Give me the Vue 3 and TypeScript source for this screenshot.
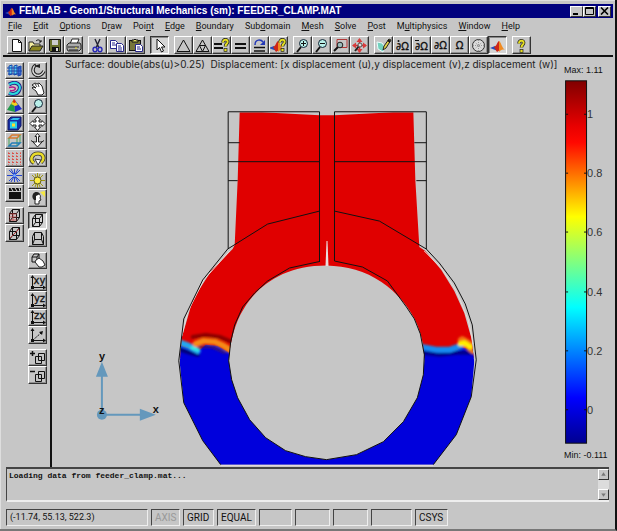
<script setup lang="ts">
interface Tool {
  id: string
  label: string
  pressed?: boolean
}
interface Menu {
  before: string
  key: string
  after: string
}

const menus: Menu[] = [
  { before: '', key: 'F', after: 'ile' },
  { before: '', key: 'E', after: 'dit' },
  { before: '', key: 'O', after: 'ptions' },
  { before: 'D', key: 'r', after: 'aw' },
  { before: 'Poi', key: 'n', after: 't' },
  { before: '', key: 'E', after: 'dge' },
  { before: '', key: 'B', after: 'oundary' },
  { before: 'Sub', key: 'd', after: 'omain' },
  { before: '', key: 'M', after: 'esh' },
  { before: '', key: 'S', after: 'olve' },
  { before: '', key: 'P', after: 'ost' },
  { before: 'M', key: 'u', after: 'ltiphysics' },
  { before: '', key: 'W', after: 'indow' },
  { before: '', key: 'H', after: 'elp' },
]

const t = (id: string, label: string, pressed = false): Tool => ({ id, label, pressed })

const toolbar: Tool[][] = [
  [t('new', 'New'), t('open', 'Open'), t('save', 'Save'), t('print', 'Print')],
  [t('cut', 'Cut'), t('copy', 'Copy'), t('paste', 'Paste')],
  [t('pointer', 'Select', true)],
  [
    t('mesh', 'Initialize mesh'),
    t('refine', 'Refine mesh'),
    t('solveParams', 'Solver parameters'),
    t('solve', 'Solve'),
    t('restart', 'Restart'),
    t('plotParams', 'Plot parameters'),
  ],
  [t('zoomIn', 'Zoom in'), t('zoomOut', 'Zoom out'), t('zoomBox', 'Zoom window'), t('extents', 'Zoom extents')],
  [
    t('draw', 'Draw mode'),
    t('pointMode', 'Point mode'),
    t('edgeMode', 'Edge mode'),
    t('boundaryMode', 'Boundary mode'),
    t('subdomainMode', 'Subdomain mode'),
    t('meshMode', 'Mesh mode'),
    t('post', 'Post mode', true),
  ],
  [t('help', 'Help')],
]

const sideLeft: Tool[][] = [
  [
    t('slice', 'Slice plot'),
    t('iso', 'Isosurface plot'),
    t('subdomain', 'Subdomain plot'),
    t('boundary', 'Boundary plot'),
    t('edge', 'Edge plot'),
    t('arrows', 'Arrow plot'),
    t('flow', 'Flow plot'),
    t('movie', 'Animate'),
  ],
  [t('geomEdges', 'Geometry edges'), t('geomBox', 'Geometry box')],
]

const sideRight: Tool[][] = [
  [
    t('orbit', 'Orbit camera'),
    t('pan', 'Pan'),
    t('zoom', 'Zoom'),
    t('move', 'Move'),
    t('forward', 'Move forward'),
    t('roll', 'Roll camera'),
  ],
  [t('light', 'Scene light'), t('headlight', 'Headlight')],
  [t('ortho', 'Orthographic', true), t('persp', 'Perspective')],
  [t('grab', 'Move scene')],
  [t('xy', 'Go to xy view'), t('yz', 'Go to yz view'), t('zx', 'Go to zx view'), t('view3d', 'Go to 3D view')],
  [t('addView', 'Increase'), t('removeView', 'Decrease')],
]

const cube =
  '<path d="M3.5 5.5h7v8h-7zM3.5 5.5l3-4h7v8l-3 4M10.5 5.5l3-4M6.5 1.5v8h7M6.5 9.5l-3 4" fill="none" stroke="#111"/>'
const lens = '<path d="M7 9l-4 5" stroke="#111" stroke-width="2"/><circle cx="9.5" cy="5.5" r="4" fill="#b9f0ea" stroke="#123"/>'
const quest =
  '<path d="M10 4.5c0-4 5.500-3.500 4.500 0c-.5 1.500-2 1.500-2 4" fill="none" stroke="#222" stroke-width="3.500"/><path d="M10 4.500c0-4 5.500-3.500 4.500 0c-.5 1.500-2 1.500-2 4" fill="none" stroke="#e6df22" stroke-width="2"/><rect x="11" y="10.500" width="3" height="3" fill="#e6df22" stroke="#222" stroke-width=".7"/>'
const flame =
  '<path d="M0 9l5-2l3 5z" fill="#2749b8"/><path d="M4 8c3-1 3-5 5-6l1 9l-3 2z" fill="#cf2617"/><path d="M9 2c2 1 3 7 6 9c-3-1-4 0-6 2z" fill="#ef8a21"/>'
const axes = '<path d="M3.5 2v10.500H15" fill="none" stroke="#111"/><path d="M3.500 0l2 3h-4zM17 12.500l-3-2v4zM2 11h3v3H2z" fill="#111"/>'
const layers = '<path d="M6.500 6.500h6v7h-6zM9.500 6.500v-3h6v7h-3M9.500 6.500v4h3" fill="none" stroke="#111"/>'
const glyph = (s: string, x = 8.5, y = 12, size = 10) =>
  `<text x="${x}" y="${y}" font-size="${size}" text-anchor="middle" fill="#111" stroke="#111" stroke-width=".3">${s}</text>`

const icons: Record<string, string> = {
  new: '<path d="M4.500 1.500h6l3 3v9h-9z" fill="#fff" stroke="#111"/><path d="M10.500 1.500v3h3" fill="none" stroke="#111"/>',
  open: '<path d="M2 13V4h4l1 2h6v3" fill="#f4eda0" stroke="#222"/><path d="M2 13l3-5h11l-3 5z" fill="#8a8520" stroke="#222"/><path d="M9 3c2-2 4-1 5 1m0-2v2h-2" fill="none" stroke="#111"/>',
  save: '<path d="M3.500 1.500h11v12h-10l-1-1z" fill="#69702b" stroke="#111"/><path d="M6 2h6v5H6z" fill="#ccc"/><path d="M6 9h7v4H6z" fill="#111"/><path d="M10 10h2v3h-2z" fill="#ddd"/>',
  print: '<path d="M5 6l2-5h7l-2 5" fill="#fff" stroke="#222"/><path d="M2 7l2-2h11l1 2v4l-2 2H3l-1-2z" fill="#aaa" stroke="#222"/><path d="M3 9h11M4 12h9" stroke="#222"/><path d="M10 10h2" stroke="#e8dc20"/>',
  cut: '<path d="M6 1l4 9M11 1L7 10" stroke="#223" stroke-width="1.400"/><ellipse cx="6" cy="11.500" rx="2" ry="2.200" fill="none" stroke="#2929b5" stroke-width="1.400"/><ellipse cx="11" cy="11.500" rx="2" ry="2.200" fill="none" stroke="#2929b5" stroke-width="1.400"/>',
  copy: '<path d="M2.500 2.500h5l2 2v6h-7z" fill="#fff" stroke="#26268c"/><path d="M4 5h3M4 7h4" stroke="#26268c"/><path d="M8.500 5.500h5l2 2v6h-7z" fill="#fff" stroke="#26268c"/><path d="M10 8h3M10 10h4M10 12h4" stroke="#26268c"/>',
  paste: '<rect x="2.500" y="2.500" width="11" height="10" fill="#77763a" stroke="#111"/><path d="M5 4V2h2l1-1l1 1h2v2z" fill="#e4df60" stroke="#111"/><path d="M8.500 6.500h5l2 2v5h-7z" fill="#fff" stroke="#26268c"/><path d="M10 9h3M10 11h4" stroke="#26268c"/>',
  pointer: '<path d="M6 1v11l2.500-2.500l2 4.500l2-1l-2-4h3.500z" fill="#fff" stroke="#111"/>',
  mesh: '<path d="M8.500 2L15 13.500H2z" fill="none" stroke="#111"/>',
  refine: '<path d="M8.500 2L15 13.500H2zM5.500 7.500h6l-3 6z" fill="none" stroke="#111"/>',
  solveParams: '<path d="M1 6h8M1 10h9" stroke="#111" stroke-width="2"/>' + quest,
  solve: '<path d="M3 6h11M3 10h11" stroke="#111" stroke-width="2"/>',
  restart: '<path d="M3 9.500h11M3 13h11" stroke="#111" stroke-width="1.600"/><path d="M4 7c0-6 6-6 8-3" fill="none" stroke="#2338b7" stroke-width="1.500"/><path d="M14 2v5H9z" fill="#2338b7"/>',
  plotParams: '<g transform="translate(-1 1)">' + flame + '</g>' + quest,
  zoomIn: lens + '<path d="M7 5.500h5M9.500 3v5" stroke="#111"/>',
  zoomOut: lens + '<path d="M7 5.500h5" stroke="#111"/>',
  zoomBox: '<path d="M5 1.500h10v8H5z" fill="none" stroke="#b23737"/><path d="M6 9l-4 4" stroke="#111" stroke-width="2"/><circle cx="8" cy="7" r="2.800" fill="#9ababa" stroke="#222"/>',
  extents: '<path d="M8.500 1v13M2 7.500h13" stroke="#cf2f2f" stroke-width="1.500"/><path d="M8.500 0l3 4h-6zM8.500 15l3-4h-6zM1 7.500l4-3v6zM16 7.500l-4-3v6z" fill="#d83c3c"/><path d="M8 8l-4 5" stroke="#222" stroke-width="2"/><circle cx="9" cy="7" r="2" fill="#ddd" stroke="#555"/>',
  draw: '<path d="M2 4l5 1l3 4l-2 5l-5-3z" fill="#72d1bd" stroke="#e8ffff"/><path d="M8 12l1-4l5-7l2 1l-5 8z" fill="#e4d547" stroke="#222"/><path d="M13 2l2 2" stroke="#111" stroke-width="2"/>',
  pointMode: glyph('∂Ω') + '<circle cx="4.500" cy="3" r="1" fill="#111"/>',
  edgeMode: glyph('∂Ω') + '<path d="M2 2.500h4" stroke="#111"/>',
  boundaryMode: glyph('∂Ω', 8.5, 11),
  subdomainMode: glyph('Ω', 8.5, 11),
  meshMode: '<circle cx="8.500" cy="7.500" r="6" fill="#ddd" stroke="#333"/><path d="M3 7.500h11M8.500 2v11M4.500 4l8 7M12.500 4l-8 7" stroke="#777" stroke-width=".7" stroke-dasharray="1 1"/>',
  post: '<g transform="translate(1 1)">' + flame + '</g>',
  help: '<g transform="translate(-4 1)">' + quest + '</g>',
  slice: '<g stroke="#1746ad"><path d="M3 3l3-1v9l-3 1zM8 3l3-1v9l-3 1z" fill="#5bd1f1"/><path d="M12 4l3-1v9l-3 1z" fill="#4169d9"/><path d="M1 5h14M1 8h15M2 11h12"/></g>',
  iso: '<path d="M3 3.500c7-4 13 0 10 6c-2 4-7 4-10 2.500" fill="none" stroke="#26268c" stroke-width="4"/><path d="M3 3.500c7-4 13 0 10 6c-2 4-7 4-10 2.500" fill="none" stroke="#27dddd" stroke-width="2"/><path d="M3 6.500c5-1 7 0 6 2c-1 1-3 1.500-5 1" fill="none" stroke="#b01a8a" stroke-width="1.500"/>',
  subdomain: '<path d="M8 1L1 12l8 2z" fill="#1f9b49"/><path d="M8 1l1 13l7-3z" fill="#1d2cc5"/><path d="M8 1L5 6l4 2l3-1z" fill="#f0d321"/><path d="M8 1L6.500 4l2 1l1.500-1z" fill="#d72b15"/>',
  boundary: '<path d="M2 4l3-3h10v9l-3 4H2z" fill="#152fa6" stroke="#111766"/><path d="M4 4l3-2h7l-2 2z" fill="#32bbee"/><rect x="4" y="5.500" width="7" height="7" fill="#28cde9"/><rect x="6" y="7.500" width="3" height="3" fill="#ffdc2d"/>',
  edge: '<path d="M3 5h8l3-3H6z" fill="none" stroke="#d77b32" stroke-width="1.500"/><path d="M3 5v8M11 5v8M14 2v8" stroke="#49a65b"/><path d="M3 13h8l3-3H6z" fill="none" stroke="#257eb7" stroke-width="1.500"/>',
  arrows: '<path d="M2 2.500h13M2 5.500h13M2 8.500h13M2 11.500h13" stroke="#d6504a" stroke-dasharray="2 2"/><path d="M2.500 1v13M6.500 1v13M10.500 1v13M14.500 1v13" stroke="#e07a70" stroke-dasharray="1 2"/>',
  flow: '<path d="M8.500 1v13M1 7.500h15M3 2l11 11M14 2L3 13M5 1l7 13M12 1L5 14" stroke="#2545cf"/><circle cx="8.500" cy="7.500" r="1.500" fill="#7af"/>',
  movie: '<path d="M3 6h12v7H3z" fill="#111"/><path d="M3 3.500h12" stroke="#111" stroke-width="3"/><path d="M5 2l2 3M9 2l2 3M13 2l1 3" stroke="#ddd"/>',
  geomEdges: cube + '<path d="M3 6h8M3 9h8M3 12h8M7 5v8" stroke="#c43a3a" opacity=".7"/>',
  geomBox: cube + '<path d="M4 12l9-9" stroke="#a33"/>',
  orbit: '<path d="M7 2C3 4 3 10 7 12c3 1 6 0 8-4" fill="none" stroke="#222" stroke-width="3.500"/><path d="M6 2.500C3 5 3 10 7 12c3 1 6 0 8-4" fill="none" stroke="#ddd" stroke-width="1.500"/><path d="M5 3l6-2v4z" fill="#222"/>',
  pan: '<path d="M3 4l3-2l2 1l2-1l3 3l2 7l-2 2H9L7 10L3 7l1-1l3 1z" fill="#fff" stroke="#222"/><path d="M6 3l2 3M9 3l1 3" stroke="#444"/>',
  zoom: lens,
  move: '<path d="M7 4H5.500l3-3.500l3 3.500H10v2h3V4.500l3 3l-3 3V9h-3v2h1.500l-3 3.500l-3-3.500H7V9H4v1.500l-3-3l3-3V6h3z" fill="#fff" stroke="#222"/>',
  forward: '<path d="M7.500 3.500H6l2.500-3l2.500 3H9.500V9H13l-4.500 5L4 9h3.500z" fill="#fff" stroke="#222"/><path d="M2 7.500l3 2m10-2l-3 2" stroke="#222"/>',
  roll: '<path d="M5 12C0 9 3 2.500 9 2.500c6 0 7 6 3 9" fill="none" stroke="#333" stroke-width="4"/><path d="M5 12C0 9 3 2.500 9 2.500c6 0 7 6 3 9" fill="none" stroke="#eadc29" stroke-width="2.500"/><path d="M6 8l6 1l-3 5z" fill="#fff" stroke="#333"/>',
  light: '<path d="M8.500 0v15M1 7.500h15M3 2l11 11M14 2L3 13M6 1l5 13M11 1L6 14" stroke="#a0970f"/><circle cx="8.500" cy="7.500" r="3.500" fill="#ffef43" stroke="#5b5820"/>',
  headlight: '<path d="M11 1l5-1v6z" fill="#f4e843"/><path d="M5 3c3-3 8 1 6 4l1 2l-2 1v3H6V9z" fill="#fff" stroke="#222"/><path d="M4 3c2-3 6-2 7 0l-4 2v4H5C3 7 3 5 4 3z" fill="#222"/>',
  ortho: cube,
  persp: '<path d="M5.500 1.500h7v7h-7zM3.500 13.500l2-5h7l2 5zM5.500 1.500l-2 4v8M12.500 1.500l2 4v8" fill="none" stroke="#111"/>',
  grab: '<path d="M3 4l2-3h5v6l-2 2H3zM3 4h5l2-3M8 4v5" fill="none" stroke="#111"/><path d="M7 7l3-2l4 3l2 4l-3 2h-3l-4-5z" fill="#fff" stroke="#222"/>',
  xy: axes + glyph('xy', 10.5, 9, 10),
  yz: axes + glyph('yz', 10.5, 9, 10),
  zx: axes + glyph('zx', 10.5, 9, 10),
  view3d: axes + '<path d="M4 12l8-7" stroke="#111" stroke-dasharray="2 1"/><path d="M14 3l-1 4l-3-3z" fill="#111"/>',
  addView: '<path d="M1 3.500h5M3.500 1v5" stroke="#111" stroke-width="1.500"/>' + layers,
  removeView: '<path d="M1 3.500h5" stroke="#111" stroke-width="1.500"/>' + layers,
}

const ticks = [
  { y: 114, label: '1' },
  { y: 173, label: '0.8' },
  { y: 232, label: '0.6' },
  { y: 292, label: '0.4' },
  { y: 351, label: '0.2' },
  { y: 410, label: '0' },
]

const surfaceTitle =
  'Surface: double(abs(u)>0.25)\u00a0 Displacement: [x displacement (u),y displacement (v),z displacement (w)]'
</script>

<template>
  <div class="window">
    <header class="titlebar">
      <svg class="logo" viewBox="0 0 16 14" aria-hidden="true" v-html="flame"></svg>
      <h1>FEMLAB - Geom1/Structural Mechanics (sm): FEEDER_CLAMP.MAT</h1>
      <div class="caption">
        <button type="button" aria-label="Minimize"><svg viewBox="0 0 9 8"><path d="M1 7h5" stroke="#000" stroke-width="2" /></svg></button>
        <button type="button" aria-label="Maximize"><svg viewBox="0 0 9 8"><path d="M.5 .5h8v7h-8zM.5 1.500h8" fill="none" stroke="#000" /></svg></button>
        <button type="button" aria-label="Close" class="close"><svg viewBox="0 0 9 8"><path d="M1 .5l7 7M8 .5l-7 7" stroke="#000" stroke-width="1.600" /></svg></button>
      </div>
    </header>

    <nav class="menubar">
      <button v-for="m in menus" :key="m.before + m.key + m.after" type="button">{{ m.before }}<u>{{ m.key }}</u>{{ m.after }}</button>
    </nav>

    <div class="toolbar">
      <div v-for="(group, g) in toolbar" :key="g" class="group">
        <button v-for="b in group" :key="b.id" type="button" class="tool" :class="{ pressed: b.pressed }" :aria-label="b.label">
          <svg viewBox="0 0 17 15" v-html="icons[b.id]"></svg>
        </button>
      </div>
    </div>

    <main class="work">
      <aside class="side">
        <div v-for="(column, c) in [sideLeft, sideRight]" :key="c" class="column">
          <div v-for="(group, g) in column" :key="g" class="stack">
            <button v-for="b in group" :key="b.id" type="button" class="tool" :class="{ pressed: b.pressed }" :aria-label="b.label">
              <svg viewBox="0 0 17 15" v-html="icons[b.id]"></svg>
            </button>
          </div>
        </div>
      </aside>

      <svg class="plot" viewBox="52 57 562 410" role="img" aria-label="Surface plot of the feeder clamp">
        <defs>
          <linearGradient id="jet" x1="0" y1="0" x2="0" y2="1">
            <stop offset="0" stop-color="#800000" />
            <stop offset="0.125" stop-color="#e80000" />
            <stop offset="0.17" stop-color="#ff0800" />
            <stop offset="0.375" stop-color="#ffff00" />
            <stop offset="0.5" stop-color="#80ff80" />
            <stop offset="0.625" stop-color="#00ffff" />
            <stop offset="0.875" stop-color="#0000ff" />
            <stop offset="1" stop-color="#000090" />
          </linearGradient>
          <filter id="soft" x="-20%" y="-50%" width="140%" height="200%"><feGaussianBlur stdDeviation="1.300" /></filter>
          <clipPath id="body">
            <path
              clip-rule="evenodd"
              d="M240 112H262L320 115H335L394 112H414L416 180L420 247L426 251L442 270L455 291L465 313L472 338L475 362L472 397L457 435L434 465H221L203 441L184 403L180 363L182 338L193 300L212 270L233 249L235 245L238 180Z
                 M327 265.500C347 266 366 271 382 282C397 292 411 308 418 325C423 338 425 348 425 361L424 375L418 398L404 422L384 442L357 455L327 460L306 457L286 451L266 438L250 420L238 398L232 380L229 361C230 344 235 323 244 309C257 287 283 265.500 327 265.500Z"
            />
          </clipPath>
        </defs>

        <text x="65" y="68" class="heading">{{ surfaceTitle }}</text>

        <g clip-path="url(#body)">
          <rect x="175" y="108" width="305" height="250" fill="#e00000" />
          <path d="M175 344L190 349L198 352L206 345L218 346L232 354V348H420L440 351L456 351L462 348L480 350V470H175Z" fill="#0000dc" />
          <g filter="url(#soft)" fill="none" stroke-linecap="round" stroke-linejoin="round">
            <path d="M193 337L206 335L220 337L232 342" stroke="#8b0000" stroke-width="4" />
            <path d="M178 349L190 353L198 355" stroke="#00007c" stroke-width="4" />
            <path d="M178 342L189 346L198 351" stroke="#24a7f2" stroke-width="6" />
            <path d="M192 348L198 350" stroke="#31f0e0" stroke-width="3" />
            <path d="M196 344L204 341L215 342L224 346L232 351" stroke="#f58a12" stroke-width="6" />
            <path d="M200 347L212 347L225 353" stroke="#421b69" stroke-width="2" />
            <path d="M422 353L440 355L458 353L475 353" stroke="#00008c" stroke-width="4" />
            <path d="M422 347L438 350L450 350L462 346" stroke="#168cf1" stroke-width="6" />
            <path d="M463 341L468 344L475 350" stroke="#f27511" stroke-width="9" />
            <path d="M461 344L465 343L471 347" stroke="#fff000" stroke-width="5" />
          </g>
        </g>
        <path d="M326 266L327 241H328L329 266Z" fill="#e8dede" />
        <path d="M230 251L204 280L188 312L182 336M425 251L442 268L457 291L469 320L474 344M221 466H434" class="shine" />

        <g class="outline">
          <path d="M228.500 249V111.500H320V262M228.500 142.500H240M228.500 161.500H320M228.500 180.500H238" />
          <path d="M427 249V111.500H335V261M427 142.500H415M427 161.500H335M427 180.500H417" />
          <path d="M221 465L203 441L184 403L179 361L184 319L203 280L228 249L268 224L320 211" />
          <path d="M434 465L457 435L472 397L477 360L473 325L466 304L455 283L440 263L427 249L380 221L335 211" />
          <path d="M320 261.500L290 268L268 281L255 293L243 307L235 325L231 342L229 361L232 380L238 398L250 420L266 438L286 451L306 457L327 460L357 455L384 442L404 422L418 398L424 375L425 355L421 334L415 319L407 307L388 281L363 267L335 261" />
        </g>

        <g class="triad">
          <path d="M102 415V376M102 415H142" stroke-width="2" />
          <path d="M102 362L108 377H96ZM156 415L140 409V421Z" stroke="none" />
          <circle cx="102" cy="415" r="5" stroke="none" />
          <text x="99" y="360">y</text>
          <text x="153" y="413">x</text>
          <text x="99" y="414">z</text>
        </g>

        <text x="565" y="73" class="limit">Max: 1.11</text>
        <rect x="566.500" y="80.500" width="21" height="363" fill="url(#jet)" stroke="#111" />
        <g v-for="tick in ticks" :key="tick.label">
          <path :d="`M567 ${tick.y}h2M585 ${tick.y}h3`" stroke="#111" />
          <text x="588" :y="tick.y + 4" class="tick">{{ tick.label }}</text>
        </g>
        <text x="565" y="458" class="limit">Min: -0.111</text>
      </svg>
    </main>

    <section class="log" aria-label="Message log">
      <pre>Loading data from feeder_clamp.mat...</pre>
      <div class="scroll">
        <button type="button" aria-label="Scroll up"><svg viewBox="0 0 8 8"><path d="M4 2l2 3H2z" fill="#777" /></svg></button>
        <button type="button" aria-label="Scroll down"><svg viewBox="0 0 8 8"><path d="M4 6l2-3H2z" fill="#777" /></svg></button>
      </div>
    </section>

    <footer class="status">
      <output class="coords">(-11.74, 55.13, 522.3)</output>
      <span class="cell off">AXIS</span>
      <span class="cell grid">GRID</span>
      <span class="cell equal">EQUAL</span>
      <span class="cell"></span>
      <span class="cell mid"></span>
      <span class="cell mid"></span>
      <span class="cell wide"></span>
      <span class="cell">CSYS</span>
    </footer>
  </div>
</template>

<style>
body {
  margin: 0;
  background: #c6c6c6;
}
</style>

<style scoped>
.window {
  box-sizing: border-box;
  min-height: 100vh;
  display: flex;
  flex-direction: column;
  padding: 4px 2px 3px 3px;
  background: #c6c6c6;
  border-top: 0;
  border-right: 2px solid #111;
  border-bottom: 2px solid #777;
  box-shadow: inset 1px 1px #dedede;
  font-family: Roboto, "Liberation Sans", Arial, sans-serif;
  font-size: 10px;
  color: #111;
}
button {
  font: inherit;
  color: inherit;
  padding: 0;
  margin: 0;
  border: 0;
  background: none;
}
.titlebar {
  display: flex;
  align-items: center;
  height: 14px;
  background: #00007e;
}
.logo {
  width: 12px;
  height: 11px;
  margin: 0 2px;
}
h1 {
  flex: 1;
  margin: 0;
  font: bold 10px/14px "Liberation Sans", Arial, sans-serif;
  color: #fff;
  white-space: nowrap;
}
.caption {
  display: flex;
  padding-right: 2px;
}
.caption button {
  display: flex;
  align-items: center;
  justify-content: center;
  width: 13px;
  height: 11px;
  box-sizing: border-box;
  background: #c6c6c6;
  border: 1px solid;
  border-color: #fff #333 #333 #fff;
}
.caption .close {
  margin-left: 2px;
}
.caption svg {
  width: 9px;
  height: 8px;
}
.menubar {
  display: flex;
  align-items: center;
  gap: 11px;
  height: 16px;
  padding: 0 5px;
  font-size: 9px;
}
.toolbar {
  display: flex;
  gap: 5px;
  padding: 2px 4px 1px;
  border-bottom: 2px solid #111;
}
.group {
  display: flex;
}
.tool {
  box-sizing: border-box;
  display: flex;
  align-items: center;
  justify-content: center;
  width: 19px;
  height: 17px;
  border: 1px solid;
  border-color: #fff #333 #333 #fff;
  box-shadow: inset -1px -1px #909090;
}
.toolbar .tool {
  height: 18px;
}
.tool.pressed {
  border-color: #333 #fff #fff #333;
  background: #d4d4d4;
  box-shadow: inset 1px 1px #888;
}
.tool svg {
  width: 17px;
  height: 15px;
  font-family: "DejaVu Sans", sans-serif;
}
.work {
  flex: 1;
  display: flex;
  min-height: 0;
}
.side {
  display: flex;
  gap: 4px;
  padding: 5px 3px 0 2px;
  border-right: 2px solid #111;
}
.column,
.stack {
  display: flex;
  flex-direction: column;
}
.column {
  gap: 5px;
}
.stack .tool:nth-child(even) {
  height: 18px;
}
.plot {
  flex: 1;
  min-width: 0;
  width: 100%;
  display: block;
  font-family: "Liberation Sans", Arial, sans-serif;
}
.heading {
  font-family: Inter, "Liberation Sans", Arial, sans-serif;
  font-size: 10px;
  fill: #222;
}
.tick {
  font-size: 11px;
  fill: #333;
}
.limit {
  font-size: 9px;
  fill: #111;
}
.outline {
  fill: none;
  stroke: #111;
  stroke-width: 1px;
}
.shine {
  fill: none;
  stroke: #e8dcd8;
}
.triad {
  fill: #6498bc;
  stroke: #6498bc;
}
.triad text {
  fill: #111;
  stroke: none;
  font-size: 11px;
  font-weight: bold;
}
.log {
  display: flex;
  justify-content: space-between;
  height: 31px;
  margin: 0 4px 0 3px;
  border-top: 2px solid #444;
  border-left: 1px solid #444;
  border-bottom: 2px solid #eee;
}
.log pre {
  margin: 0;
  padding: 2px;
  font: bold 8px/9px "Liberation Mono", "Courier New", monospace;
}
.scroll {
  display: flex;
  flex-direction: column;
  justify-content: space-between;
  background: #dcdcdc;
}
.scroll button {
  display: flex;
  box-sizing: border-box;
  width: 11px;
  height: 11px;
  background: #c6c6c6;
  border: 1px solid;
  border-color: #fff #333 #333 #fff;
}
.status {
  display: flex;
  gap: 3px;
  padding: 7px 3px 0;
}
.coords,
.cell {
  box-sizing: border-box;
  height: 17px;
  width: 33px;
  padding-left: 3px;
  line-height: 15px;
  white-space: nowrap;
  border: 1px solid;
  border-color: #444 #eee #eee #444;
}
.coords {
  width: 142px;
  font-size: 9px;
}
.grid {
  width: 31px;
}
.equal {
  width: 39px;
}
.mid {
  width: 35px;
}
.wide {
  width: 41px;
}
.off {
  width: 29px;
  color: #999;
}
</style>
